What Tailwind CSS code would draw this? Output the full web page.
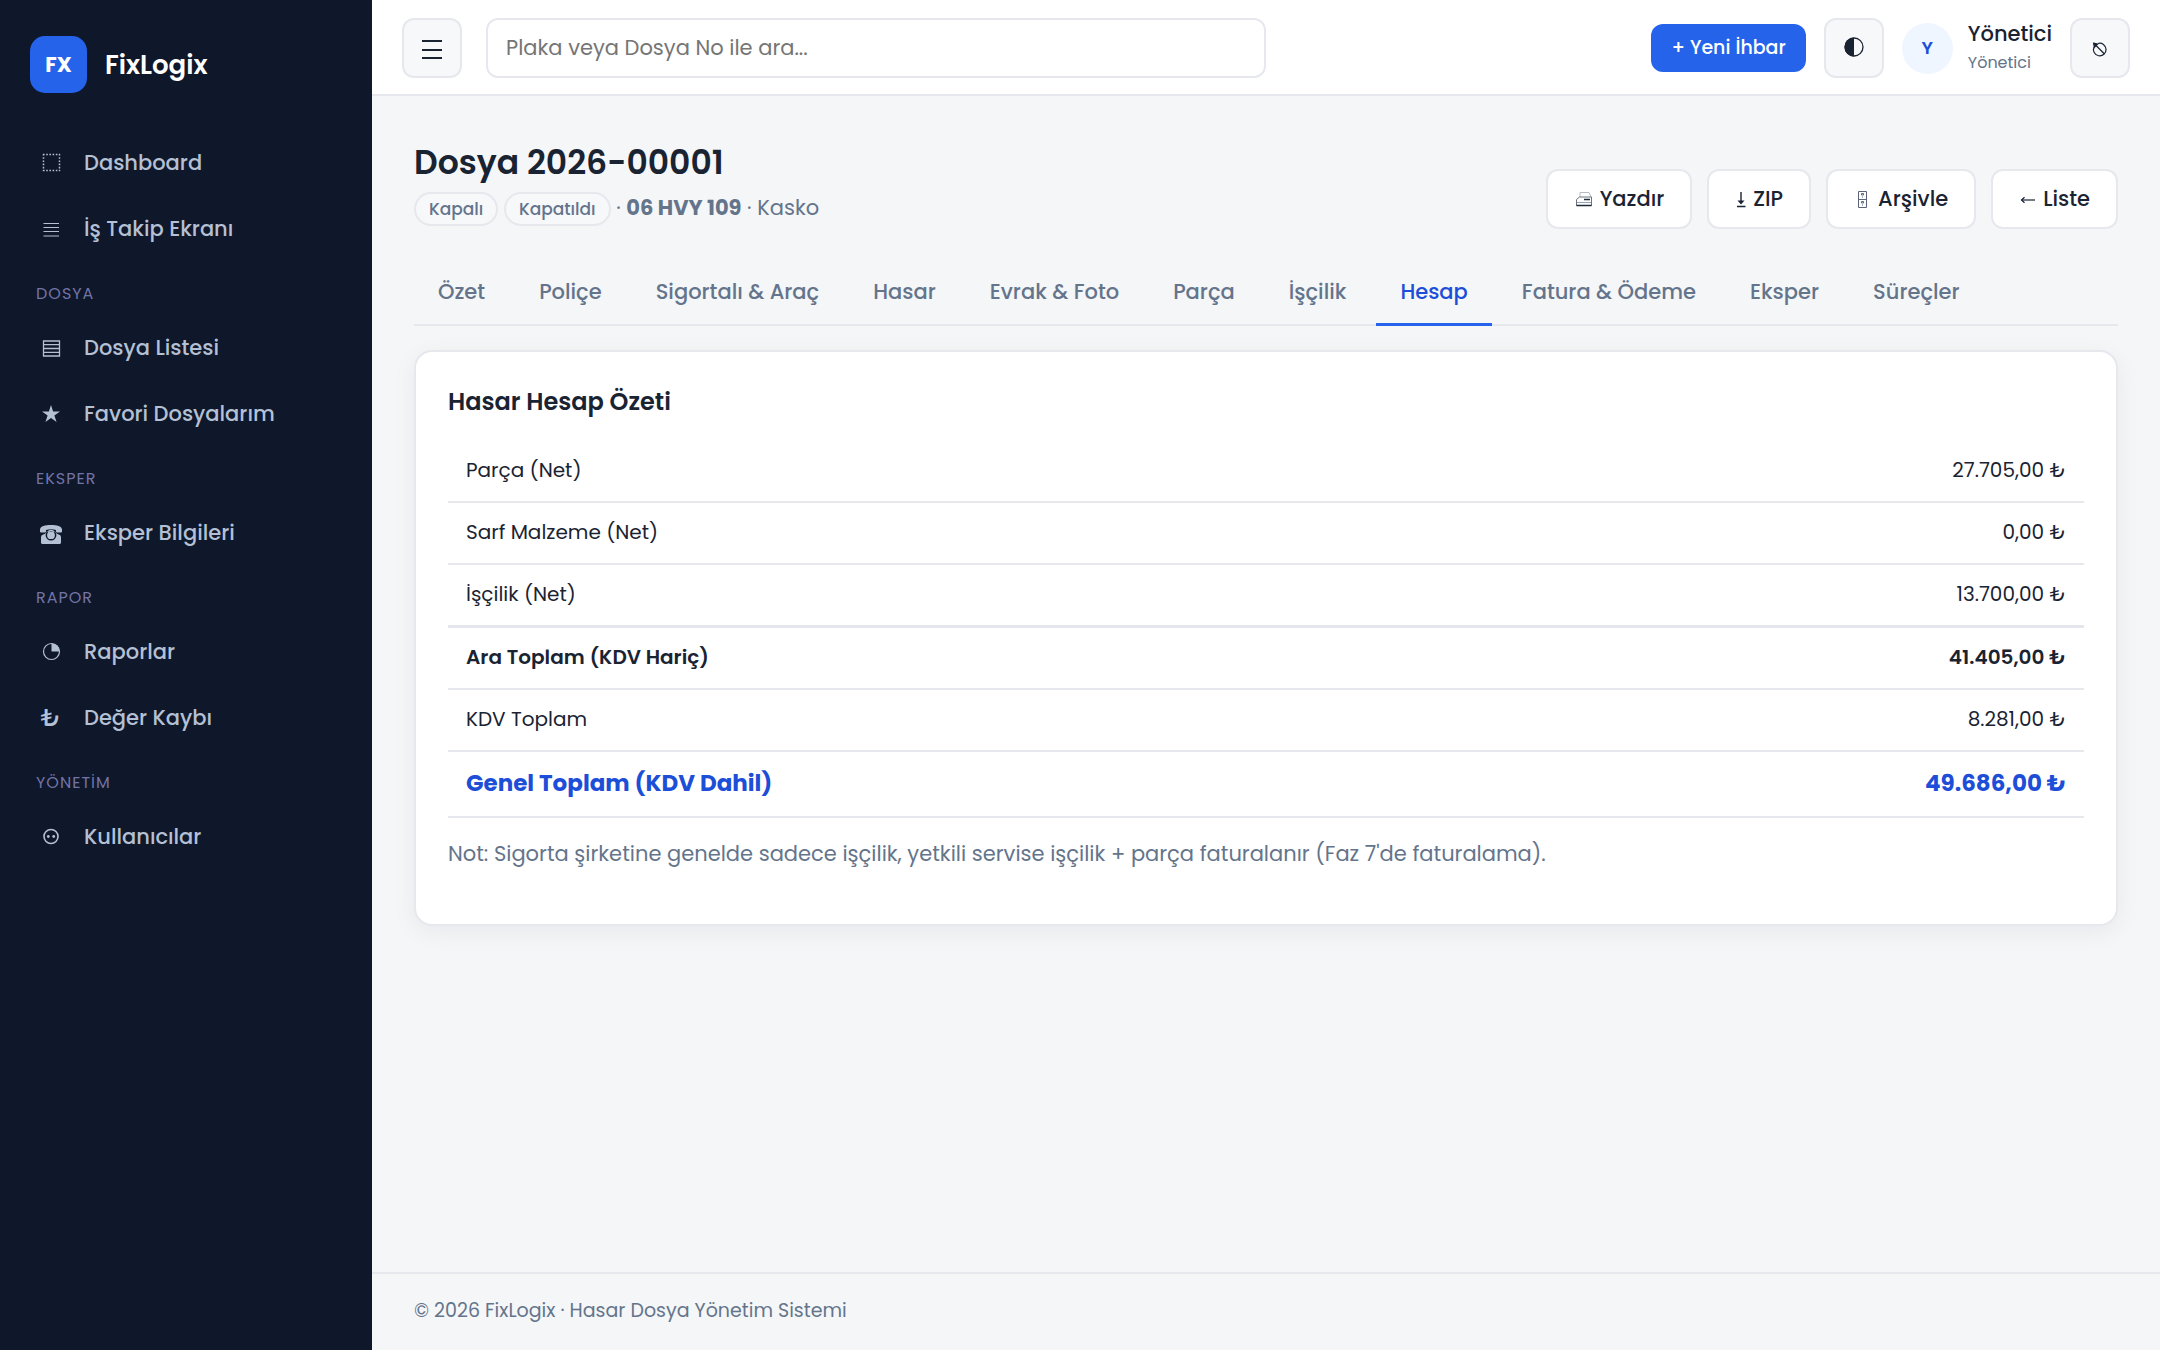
<!DOCTYPE html>
<html lang="tr">
<head>
<meta charset="utf-8">
<meta name="viewport" content="width=device-width, initial-scale=1">
<title>Dosya 2026-00001 · FixLogix</title>
<script src="https://cdn.jsdelivr.net/npm/@tailwindcss/browser@4"></script>
</head>
<body class="flex min-h-screen bg-[#f4f6f8] font-[Poppins,Inter,sans-serif] text-[21px] leading-8 text-[#1a2332]">

<!-- Sidebar -->
<aside class="w-[372px] shrink-0 bg-[#0f172a] text-[#b4c0d4]">
  <a href="#" class="flex items-center gap-[18px] px-[30px] pt-9 pb-10 text-white">
    <span class="flex size-[57px] items-center justify-center rounded-[15px] bg-[#2563eb] font-bold">FX</span>
    <span class="text-[26px] font-semibold">FixLogix</span>
  </a>
  <nav class="flex flex-col gap-1.5 px-[15px] font-medium">
    <a href="#" class="flex h-[60px] items-center gap-[18px] px-[21px]">
      <svg class="h-6 w-[30px]" viewBox="0 0 30 24" fill="none" stroke="currentColor" stroke-width="1.5" stroke-dasharray="1.6 1.6"><path d="M7 3.500h17M7 19.500h17M7.500 3v17M23.500 3v17"/></svg>
      Dashboard
    </a>
    <a href="#" class="flex h-[60px] items-center gap-[18px] px-[21px]">
      <svg class="h-6 w-[30px]" viewBox="0 0 30 24" fill="none" stroke="currentColor" stroke-width="1.200"><path d="M7.500 6.500h15.500M7.500 10.500h15.500M7.500 14.500h15.500M7.500 19h15.500"/></svg>
      İş Takip Ekranı
    </a>
    <h2 class="px-[21px] pt-4 pb-[5px] text-[16px] leading-[26px] font-normal tracking-[1px] text-[#7274a6]">DOSYA</h2>
    <a href="#" class="flex h-[60px] items-center gap-[18px] px-[21px]">
      <svg class="h-6 w-[30px]" viewBox="0 0 30 24" fill="none" stroke="currentColor" stroke-width="1.300"><path d="M7.500 5h16v15h-16zM7.500 8.700h16M7.500 12.500h16M7.500 16.300h16"/></svg>
      Dosya Listesi
    </a>
    <a href="#" class="flex h-[60px] items-center gap-[18px] px-[21px]">
      <svg class="h-6 w-[30px]" viewBox="0 0 30 24" fill="currentColor"><path d="M15 3l2.100 6.500h6.900l-5.600 4 2.200 6.500-5.600-4-5.600 4 2.200-6.500-5.600-4h6.900z"/></svg>
      Favori Dosyalarım
    </a>
    <h2 class="px-[21px] pt-4 pb-[5px] text-[16px] leading-[26px] font-normal tracking-[1px] text-[#7274a6]">EKSPER</h2>
    <a href="#" class="flex h-[60px] items-center gap-[18px] px-[21px]">
      <svg class="h-6 w-[30px]" viewBox="0 0 30 24" fill="currentColor" fill-rule="evenodd"><path d="M4 10.500V8.500C4.500 5 9 4 15 4s10.500 1 11 4.500v2c0 .6-.4.900-1 .900h-4c-.6 0-1-.3-1-.9V9c-3-1-7-1-10 0v1.500c0 .6-.4.900-1 .900H5c-.6 0-1-.3-1-.9z"/><path d="M5 21.500v-5c0-1.700 1-2.800 3-3.200C9.600 12.900 10 12 10.500 10.800h9c.5 1.200.900 2.100 2.500 2.500 2 .4 3 1.500 3 3.200v5c0 .9-.6 1.500-1.500 1.500h-17C5.600 23 5 22.400 5 21.500zM15 8.800a5.400 5.400 0 1 0 0 10.800a5.400 5.400 0 1 0 0-10.800zM15 10.300a3.900 3.900 0 1 1 0 7.800a3.900 3.900 0 1 1 0-7.800z"/></svg>
      Eksper Bilgileri
    </a>
    <h2 class="px-[21px] pt-4 pb-[5px] text-[16px] leading-[26px] font-normal tracking-[1px] text-[#7274a6]">RAPOR</h2>
    <a href="#" class="flex h-[60px] items-center gap-[18px] px-[21px]">
      <svg class="h-6 w-[30px]" viewBox="0 0 30 24"><circle cx="15.500" cy="11.500" r="8" fill="none" stroke="currentColor" stroke-width="1.200"/><path fill="currentColor" d="M15.500 11.500V3.500a8 8 0 0 1 8 8z"/></svg>
      Raporlar
    </a>
    <a href="#" class="flex h-[60px] items-center gap-[18px] px-[21px]">
      <span class="w-[30px] text-center text-[24px]">₺</span>
      Değer Kaybı
    </a>
    <h2 class="px-[21px] pt-4 pb-[5px] text-[16px] leading-[26px] font-normal tracking-[1px] text-[#7274a6]">YÖNETİM</h2>
    <a href="#" class="flex h-[60px] items-center gap-[18px] px-[21px]">
      <svg class="h-6 w-[30px]" viewBox="0 0 30 24"><circle cx="15" cy="11.500" r="7" fill="none" stroke="currentColor" stroke-width="1.600"/><circle cx="12.300" cy="11.500" r="1.400" fill="currentColor"/><circle cx="17.700" cy="11.500" r="1.400" fill="currentColor"/></svg>
      Kullanıcılar
    </a>
  </nav>
</aside>

<div class="flex min-w-0 flex-1 flex-col">

  <!-- Top bar -->
  <header class="flex items-center border-b-2 border-[#e6e8ed] bg-white px-[30px] pt-[18px] pb-4">
    <button type="button" aria-label="Menü" class="flex size-[60px] shrink-0 items-center justify-center rounded-xl border-2 border-[#e6e8ed] bg-[#f7f8fa]">
      <svg class="size-6" viewBox="0 0 24 24" stroke="currentColor" stroke-width="2"><path d="M2 5h20M2 14h20M2 22h20"/></svg>
    </button>
    <input type="search" aria-label="Ara" placeholder="Plaka veya Dosya No ile ara..." class="mr-6 ml-6 h-[60px] w-full max-w-[780px] rounded-xl border-2 border-[#e6e8ed] bg-white px-[18px] pb-[2px] placeholder:text-[#757575]">
    <div class="ml-auto flex shrink-0 items-center gap-[18px]">
      <button type="button" class="h-12 rounded-xl bg-[#2563eb] px-5 text-[19px] font-medium text-white">+ Yeni İhbar</button>
      <button type="button" aria-label="Tema" class="flex size-[60px] items-center justify-center rounded-xl border-2 border-[#e6e8ed] bg-[#f7f8fa]">
        <svg class="size-6" viewBox="0 0 24 24"><circle cx="12" cy="11" r="9" fill="none" stroke="currentColor" stroke-width="1.300"/><path fill="currentColor" d="M12 1.500a9.500 9.500 0 0 0 0 19z"/></svg>
      </button>
      <div class="flex items-center gap-[15px]">
        <span class="flex size-[51px] items-center justify-center rounded-full bg-[#eff6ff] text-[18px] font-semibold text-[#1d4ed8]">Y</span>
        <div>
          <div class="leading-[30px] font-medium">Yönetici</div>
          <div class="text-[16px] leading-[28px] text-[#64748b]">Yönetici</div>
        </div>
      </div>
      <button type="button" aria-label="Çıkış" class="flex size-[60px] items-center justify-center rounded-xl border-2 border-[#e6e8ed] bg-[#f7f8fa]">
        <svg class="size-6" viewBox="0 0 24 24" fill="none" stroke="currentColor" stroke-width="1.200"><path d="M10 7.500a6.300 6.300 0 1 1-4 3.500"/><path d="M16.500 18L6.500 8"/><path fill="currentColor" d="M5.600 7.200l4 .8-3.200 3.200z"/></svg>
      </button>
    </div>
  </header>

  <main class="flex-1 px-[42px] pt-[43px]">
    <div class="mb-[29px] flex items-end justify-between">
      <div>
        <h1 class="text-[33px] leading-[48px] font-semibold">Dosya 2026-00001</h1>
        <p class="leading-[42px] text-[#64748b]">
          <span class="inline-block rounded-full border-2 border-[#e6e8ed] bg-[#f7f8fa] px-[13px] align-middle text-[17px] leading-[30px] font-medium">Kapalı</span>
          <span class="inline-block rounded-full border-2 border-[#e6e8ed] bg-[#f7f8fa] px-[13px] align-middle text-[17px] leading-[30px] font-medium">Kapatıldı</span>
          · <strong class="font-bold">06 HVY 109</strong> · Kasko
        </p>
      </div>
      <div class="flex gap-[15px] font-medium">
        <button type="button" class="flex h-[60px] items-center gap-1.5 rounded-xl border-2 border-[#e6e8ed] bg-white px-[26px]">
          <svg class="h-5 w-5" viewBox="0 0 20 20" fill="none" stroke="#6b7280" stroke-width="1"><path stroke="#b6bac4" d="M6 8V3.500h9l2 4.500"/><path d="M2.500 16.500v-6l3-2.500h12v8.500z"/><path stroke="#1f2937" stroke-width="1.500" d="M10 10.500h6M2.500 16.500h15"/><path stroke="#94a3b8" d="M3 13.500h14"/></svg>
          Yazdır
        </button>
        <button type="button" class="flex h-[60px] items-center gap-1.5 rounded-xl border-2 border-[#e6e8ed] bg-white px-[26px]">
          <svg class="h-5 w-3" viewBox="0 0 12 20" fill="none" stroke="currentColor" stroke-width="1.400"><path d="M6 3v11M2 17.500h8.500"/><path fill="currentColor" stroke="none" d="M2.500 11.500h7L6 15.500z"/></svg>
          ZIP
        </button>
        <button type="button" class="flex h-[60px] items-center gap-1.5 rounded-xl border-2 border-[#e6e8ed] bg-white px-[26px]">
          <svg class="h-5 w-[18px]" viewBox="0 0 18 20" fill="none" stroke="#5b6478" stroke-width="1"><path d="M4.500 2.500h8v16h-8zM4.500 10.500h8"/><path d="M7.500 4.500h2v1.500h-2zM7.500 12.500h2v1.500h-2zM8 8h1M8 16h1"/></svg>
          Arşivle
        </button>
        <button type="button" class="flex h-[60px] items-center gap-1.5 rounded-xl border-2 border-[#e6e8ed] bg-white px-[26px]">
          <svg class="h-5 w-[18px]" viewBox="0 0 18 20" fill="none" stroke="currentColor" stroke-width="1.200"><path d="M2.500 11H16"/><path d="M5.500 8.200L2.500 11l3 2.800"/></svg>
          Liste
        </button>
      </div>
    </div>

    <nav class="mb-6 flex gap-1.5 border-b-2 border-[#e6e8ed] font-medium text-[#64748b]">
      <a href="#" class="-mb-0.5 border-b-3 border-transparent px-6 pt-[18px] pb-[15px]">Özet</a>
      <a href="#" class="-mb-0.5 border-b-3 border-transparent px-6 pt-[18px] pb-[15px]">Poliçe</a>
      <a href="#" class="-mb-0.5 border-b-3 border-transparent px-6 pt-[18px] pb-[15px]">Sigortalı &amp; Araç</a>
      <a href="#" class="-mb-0.5 border-b-3 border-transparent px-6 pt-[18px] pb-[15px]">Hasar</a>
      <a href="#" class="-mb-0.5 border-b-3 border-transparent px-6 pt-[18px] pb-[15px]">Evrak &amp; Foto</a>
      <a href="#" class="-mb-0.5 border-b-3 border-transparent px-6 pt-[18px] pb-[15px]">Parça</a>
      <a href="#" class="-mb-0.5 border-b-3 border-transparent px-6 pt-[18px] pb-[15px]">İşçilik</a>
      <a href="#" aria-current="page" class="-mb-0.5 border-b-3 border-[#2563eb] px-6 pt-[18px] pb-[15px] text-[#1d4ed8]">Hesap</a>
      <a href="#" class="-mb-0.5 border-b-3 border-transparent px-6 pt-[18px] pb-[15px]">Fatura &amp; Ödeme</a>
      <a href="#" class="-mb-0.5 border-b-3 border-transparent px-6 pt-[18px] pb-[15px]">Eksper</a>
      <a href="#" class="-mb-0.5 border-b-3 border-transparent px-6 pt-[18px] pb-[15px]">Süreçler</a>
    </nav>

    <section class="rounded-[18px] border-2 border-[#e6e8ed] bg-white px-8 pt-8 pb-[54px] shadow-[0_6px_24px_rgba(15,23,42,0.06)]">
      <h2 class="mb-[21px] text-[24px] leading-9 font-semibold">Hasar Hesap Özeti</h2>
      <table class="w-full border-collapse text-[20px] leading-[31px]">
        <tbody>
          <tr class="border-b-2 border-[#e6e8ed]"><th scope="row" class="px-[18px] pt-[14px] pb-[15px] text-left font-normal">Parça (Net)</th><td class="px-[18px] pt-[14px] pb-[15px] text-right">27.705,00 ₺</td></tr>
          <tr class="border-b-2 border-[#e6e8ed]"><th scope="row" class="px-[18px] pt-[14px] pb-[15px] text-left font-normal">Sarf Malzeme (Net)</th><td class="px-[18px] pt-[14px] pb-[15px] text-right">0,00 ₺</td></tr>
          <tr class="border-b-3 border-[#e3e6eb]"><th scope="row" class="px-[18px] pt-[14px] pb-[15px] text-left font-normal">İşçilik (Net)</th><td class="px-[18px] pt-[14px] pb-[15px] text-right">13.700,00 ₺</td></tr>
          <tr class="border-b-2 border-[#e6e8ed] font-semibold"><th scope="row" class="px-[18px] pt-[14px] pb-[15px] text-left font-semibold">Ara Toplam (KDV Hariç)</th><td class="px-[18px] pt-[14px] pb-[15px] text-right">41.405,00 ₺</td></tr>
          <tr class="border-b-2 border-[#e6e8ed]"><th scope="row" class="px-[18px] pt-[14px] pb-[15px] text-left font-normal">KDV Toplam</th><td class="px-[18px] pt-[14px] pb-[15px] text-right">8.281,00 ₺</td></tr>
          <tr class="border-b-2 border-[#e6e8ed] text-[23px] leading-[35px] font-bold text-[#1d4ed8]"><th scope="row" class="px-[18px] pt-[14px] pb-[15px] text-left font-bold">Genel Toplam (KDV Dahil)</th><td class="px-[18px] pt-[14px] pb-[15px] text-right">49.686,00 ₺</td></tr>
        </tbody>
      </table>
      <p class="mt-5 text-[#64748b]">Not: Sigorta şirketine genelde sadece işçilik, yetkili servise işçilik + parça faturalanır (Faz 7'de faturalama).</p>
    </section>
  </main>

  <footer class="border-t-2 border-[#e6e8ed] px-[42px] pt-[23px] pb-[25px] text-[19px] leading-7 text-[#64748b]">© 2026 FixLogix · Hasar Dosya Yönetim Sistemi</footer>
</div>
</body>
</html>
